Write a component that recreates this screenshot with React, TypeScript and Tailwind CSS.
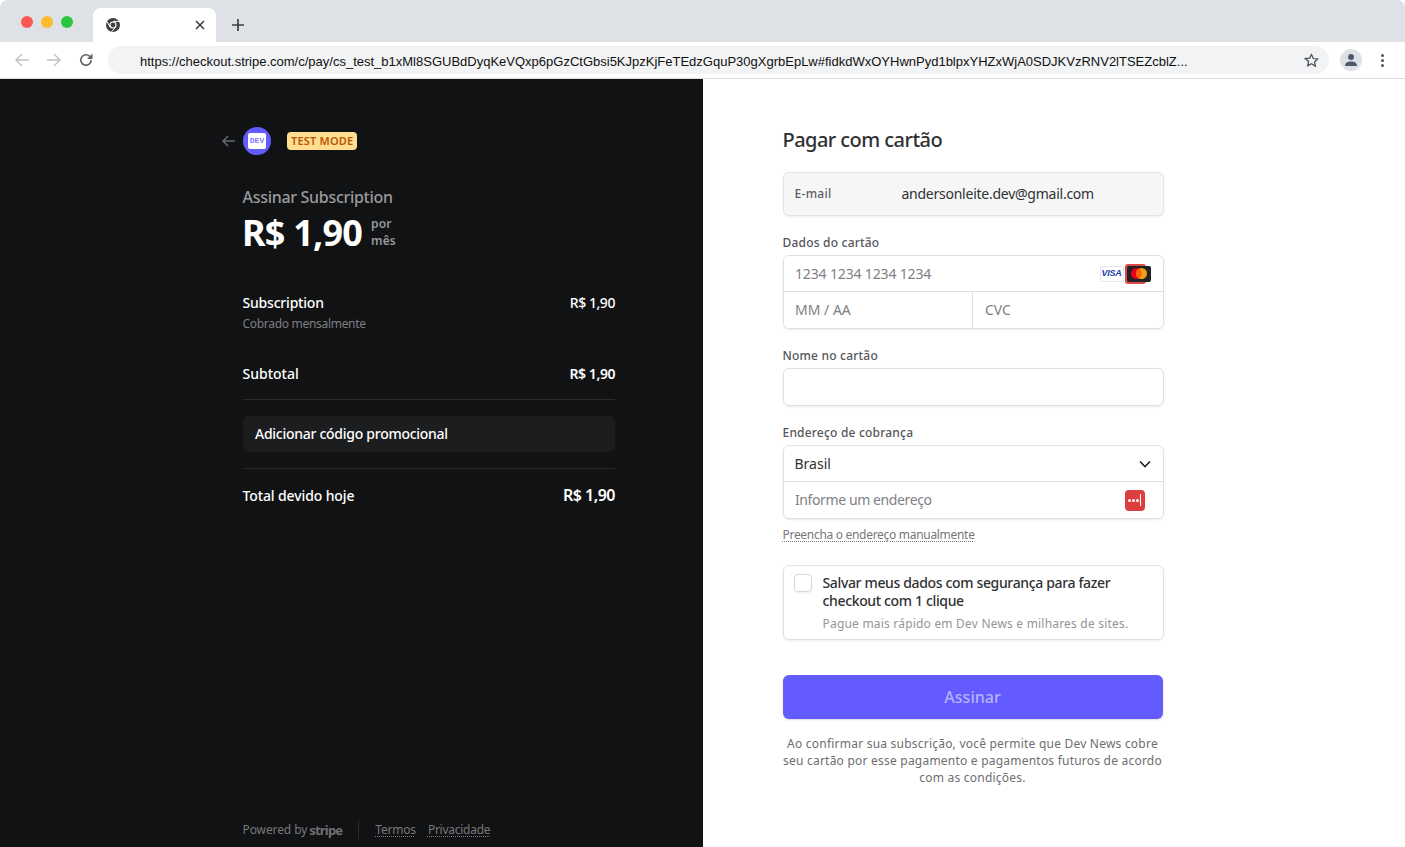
import React from "react";

const font = { fontFamily: '"Noto Sans", "Open Sans", sans-serif' };

function Chrome() {
  return (
    <div className="shrink-0" style={{ fontFamily: '"Liberation Sans", sans-serif' }}>
      <div className="h-[42px] bg-[#dee1e6] rounded-t-[8px] flex items-end relative">
        <div className="flex gap-[8px] pl-[21px] pb-[14px]">
          <span className="w-[12px] h-[12px] rounded-full bg-[#fc5753]" />
          <span className="w-[12px] h-[12px] rounded-full bg-[#fdbc2e]" />
          <span className="w-[12px] h-[12px] rounded-full bg-[#29c73f]" />
        </div>
        <div className="ml-[20px] w-[123px] h-[34px] bg-white rounded-t-[8px] flex items-center justify-between pl-[13px] pr-[11px]">
          <svg width="14" height="14" viewBox="0 0 14 14">
            <circle cx="7" cy="7" r="7" fill="#3c4043" />
            <circle cx="7" cy="7" r="3.6" fill="#fff" />
            <circle cx="7" cy="7" r="2.4" fill="#3c4043" />
            <path d="M7 3.4h6.4M4 9l-3-5.5M8.8 10.2 5.5 13.8" stroke="#fff" strokeWidth="1" />
          </svg>
          <svg width="10" height="10" viewBox="0 0 10 10"><path d="M1 1l8 8M9 1l-8 8" stroke="#3c4043" strokeWidth="1.6" /></svg>
        </div>
        <div className="ml-[15px] pb-[10px]">
          <svg width="14" height="14" viewBox="0 0 14 14" className="block"><path d="M7 1v12M1 7h12" stroke="#3c4043" strokeWidth="1.7" /></svg>
        </div>
      </div>
      <div className="h-[37px] bg-white border-b border-[#dadce0] flex items-center">
        <div className="w-[108px] flex items-center pl-[15px] gap-[18px] shrink-0">
          <svg width="14" height="14" viewBox="0 0 14 14"><path d="M14 7H1.5M7 1 1 7l6 6" fill="none" stroke="#bdc1c6" strokeWidth="1.4" /></svg>
          <svg width="14" height="14" viewBox="0 0 14 14"><path d="M0 7h12.5M7 1l6 6-6 6" fill="none" stroke="#bdc1c6" strokeWidth="1.4" /></svg>
          <svg width="14" height="14" viewBox="0 0 14 14"><path d="M12.2 7a5.2 5.2 0 1 1-1.5-3.7L12.5 5" fill="none" stroke="#5f6368" strokeWidth="1.6" /><path d="M13.5 0.5v5.5H8z" fill="#5f6368" /></svg>
        </div>
        <div className="w-[1221px] h-[28px] rounded-full bg-[#f1f3f4] flex items-center pl-[32px] pr-[10px] text-[13px] text-[#111] justify-between shrink-0">
          <span className="whitespace-nowrap pt-[3px]">https://checkout.stripe.com/c/pay/cs_test_b1xMl8SGUBdDyqKeVQxp6pGzCtGbsi5KJpzKjFeTEdzGquP30gXgrbEpLw#fidkdWxOYHwnPyd1blpxYHZxWjA0SDJKVzRNV2lTSEZcblZ...</span>
          <svg width="15" height="15" viewBox="0 0 24 24" fill="none" stroke="#4a4e52" strokeWidth="2"><path d="m12 2.5 2.9 6.3 6.9.8-5.1 4.7 1.4 6.8L12 17l-6.1 3.4 1.4-6.8-5.1-4.7 6.9-.8z" /></svg>
        </div>
        <div className="ml-[11px] w-[22px] h-[22px] rounded-full bg-[#dee1e6] flex items-center justify-center shrink-0">
          <svg width="14" height="14" viewBox="0 0 14 14" fill="#50596b"><circle cx="7" cy="4" r="3" /><path d="M1 13c0-3.2 2.6-4.6 6-4.6s6 1.4 6 4.6z" /></svg>
        </div>
        <div className="ml-[19px] flex flex-col gap-[2px]">
          <span className="w-[3px] h-[3px] rounded-full bg-[#50565c]" />
          <span className="w-[3px] h-[3px] rounded-full bg-[#50565c]" />
          <span className="w-[3px] h-[3px] rounded-full bg-[#50565c]" />
        </div>
      </div>
    </div>
  );
}

function Left() {
  return (
    <div className="w-[703px] h-full bg-[#111214] flex flex-col pl-[243px] pr-[88px] shrink-0">
      <div className="flex items-center h-[28px] mt-[48px] relative">
        <svg width="14" height="12" viewBox="0 0 14 12" className="absolute left-[-21px] top-[8px]"><path d="M13 6H1.5M6 1 1 6l5 5" fill="none" stroke="#666a70" strokeWidth="1.5" /></svg>
        <div className="w-[28px] h-[28px] rounded-full bg-[#635bff] flex items-center justify-center">
          <div className="w-[18px] h-[16px] bg-white rounded-[2px] flex items-center justify-center text-[8px] font-bold text-[#7f79ff] leading-none" style={{ fontFamily: '"Liberation Mono", monospace' }}>DEV</div>
        </div>
        <div className="ml-[16px] h-[18px] px-[4px] rounded-[4px] bg-[#ffde92] text-[#bb5504] text-[11px] font-semibold leading-[18px] tracking-[0.2px]">TEST MODE</div>
      </div>
      <div className="mt-[30px] text-[16px] leading-[24px] text-[#9a9b9c] font-medium tracking-[-0.3px] ml-[-0.5px]">Assinar Subscription</div>
      <div className="flex items-center mt-[6px] h-[36px] ml-[-1px]">
        <div className="text-[36px] leading-[36px] font-bold text-white tracking-[-0.8px] whitespace-nowrap">R$ 1,90</div>
        <div className="ml-[9px] pb-[3px] text-[12px] leading-[17px] font-semibold text-[#98999b] tracking-[0.1px]">por<br />mês</div>
      </div>
      <div className="mt-[42px] flex justify-between text-[14px] leading-[20px] font-medium text-white">
        <span className="tracking-[-0.2px] ml-[-0.5px]">Subscription</span><span className="tracking-[-0.45px]">R$ 1,90</span>
      </div>
      <div className="mt-[2px] text-[12px] leading-[18px] text-[#7e7f81] tracking-[-0.3px] ml-[-0.5px]">Cobrado mensalmente</div>
      <div className="mt-[31px] h-[36px] border-b border-[#2a2b2d] flex justify-between text-[14px] leading-[20px] font-medium text-white">
        <span className="ml-[-0.5px]">Subtotal</span><span className="font-semibold tracking-[-0.45px]">R$ 1,90</span>
      </div>
      <div className="mt-[16px] h-[36px] rounded-[6px] bg-[#1c1d1f] px-[12px] pb-[2px] flex items-center text-[14px] font-medium text-white tracking-[-0.27px]">Adicionar código promocional</div>
      <div className="mt-[16px] border-t border-[#2a2b2d] pt-[15px] flex justify-between items-center h-[22px] box-content text-[14px] font-medium text-white">
        <span className="tracking-[-0.12px] ml-[-0.5px]">Total devido hoje</span><span className="text-[16px] font-semibold tracking-[-0.5px]">R$ 1,90</span>
      </div>
      <div className="mt-auto mb-[8px] flex items-center text-[12px] leading-[18px] text-[#77787a] ml-[-0.5px]">
        <span className="tracking-[-0.1px]">Powered by</span>
        <span className="ml-[2px] font-bold text-[13px] tracking-[-0.8px] text-[#6f7072]">stripe</span>
        <span className="ml-[16px] w-px h-[18px] bg-[#2a2b2d]" />
        <a className="ml-[16px] underline decoration-dotted underline-offset-2 tracking-[-0.2px]">Termos</a>
        <a className="ml-[12px] underline decoration-dotted underline-offset-2 tracking-[-0.25px]">Privacidade</a>
      </div>
    </div>
  );
}

const shadow = "shadow-[0_1px_2px_rgba(0,0,0,0.08)]";
const label = "text-[12px] leading-[16px] font-medium text-[#55565a] tracking-[0.2px]";

function Right() {
  return (
    <div className="flex-1 h-full bg-white pl-[79.5px] overflow-hidden">
      <div className="w-[381px]">
        <div className="mt-[47px] text-[20px] leading-[28px] font-medium text-[#303133] tracking-[-0.55px]">Pagar com cartão</div>
        <div className={`mt-[18px] h-[44px] rounded-[6px] bg-[#f6f6f7] border border-[#e3e4e6] flex items-center ${shadow}`}>
          <span className="w-[118px] pl-[11px] text-[12px] font-medium text-[#5e5f62] tracking-[0.3px]">E-mail</span>
          <span className="text-[14px] text-[#303133] tracking-[-0.25px] pb-[2px]">andersonleite.dev@gmail.com</span>
        </div>
        <div className={`mt-[19px] ${label}`}>Dados do cartão</div>
        <div className={`mt-[4px] rounded-[6px] border border-[#e0e0e2] ${shadow}`}>
          <div className="h-[36px] flex items-center justify-between pl-[11.5px] pr-[12px] border-b border-[#e0e0e2] text-[14px] text-[#808184]">
            <span className="tracking-[-0.15px]">1234 1234 1234 1234</span>
            <span className="flex items-center gap-[3px]">
              <span className="w-[24px] h-[16px] border border-[#e6e6e6] rounded-[1px] flex items-center justify-center text-[9px] font-bold italic text-[#1a3fb0] leading-none tracking-[-0.2px]" style={{ fontFamily: '"Liberation Sans", sans-serif' }}>VISA</span>
              <span className="relative w-[24px] h-[16px]">
                <span className="absolute left-[-2px] top-[-2px] w-[21px] h-[20px] rounded-[3px] bg-[#d9484a]" />
                <span className="absolute inset-0 rounded-[2px] bg-[#222] flex items-center justify-center">
                  <svg width="16" height="11" viewBox="0 0 16 11"><circle cx="5.5" cy="5.5" r="5.5" fill="#eb001b" /><circle cx="10.5" cy="5.5" r="5.5" fill="#f79e1b" /><path d="M8 .7a5.5 5.5 0 0 1 0 9.6 5.5 5.5 0 0 1 0-9.6z" fill="#ff5f00" /></svg>
                </span>
              </span>
            </span>
          </div>
          <div className="h-[36px] flex text-[14px] text-[#808184]">
            <div className="w-[189.5px] pl-[11.5px] flex items-center border-r border-[#e0e0e2] pb-[1px]">MM / AA</div>
            <div className="pl-[12px] flex items-center pb-[1px]">CVC</div>
          </div>
        </div>
        <div className={`mt-[19px] ${label}`}>Nome no cartão</div>
        <div className={`mt-[4px] h-[38px] rounded-[6px] border border-[#e0e0e2] ${shadow}`} />
        <div className={`mt-[19px] ${label}`}>Endereço de cobrança</div>
        <div className={`mt-[4px] rounded-[6px] border border-[#e0e0e2] ${shadow}`}>
          <div className="h-[36px] flex items-center justify-between pl-[11px] pr-[12px] border-b border-[#e0e0e2] text-[14px] text-[#303133]">
            <span>Brasil</span>
            <svg width="12" height="8" viewBox="0 0 12 8"><path d="m1 1.5 5 5 5-5" fill="none" stroke="#222" strokeWidth="1.6" /></svg>
          </div>
          <div className="h-[36px] flex items-center justify-between pl-[11.5px] pr-[18px] text-[14px] text-[#808184]">
            <span className="tracking-[-0.4px] pb-[2px]">Informe um endereço</span>
            <span className="w-[20px] h-[21px] rounded-[4px] bg-[#dd3f3f] flex items-center justify-center gap-[1px]">
              <span className="w-[3px] h-[3px] rounded-full bg-white" />
              <span className="w-[3px] h-[3px] rounded-full bg-white" />
              <span className="w-[3px] h-[3px] rounded-full bg-white" />
              <span className="w-[1px] h-[12px] bg-white" />
            </span>
          </div>
        </div>
        <div className="mt-[7px] text-[12px] leading-[18px] text-[#77787b] underline decoration-dotted underline-offset-2 tracking-[-0.3px]">Preencha o endereço manualmente</div>
        <div className={`mt-[21px] h-[75px] rounded-[6px] border border-[#e0e0e2] flex pl-[10.5px] pt-[8px] ${shadow}`}>
          <span className={`w-[18px] h-[18px] rounded-[4px] border border-[#d8d8da] shrink-0 ${shadow}`} />
          <div className="ml-[10.5px]">
            <div className="text-[14px] leading-[18px] font-medium text-[#303133] tracking-[-0.35px]">Salvar meus dados com segurança para fazer<br />checkout com 1 clique</div>
            <div className="mt-[5px] text-[12px] leading-[18px] text-[#949598] tracking-[0.2px]">Pague mais rápido em Dev News e milhares de sites.</div>
          </div>
        </div>
        <div className="mt-[35px] h-[44px] w-[380px] rounded-[6px] bg-[#635bff] flex items-center justify-center text-[16px] font-medium text-[#b5b2ff] shadow-[0_1px_2px_rgba(0,0,0,0.15)]">Assinar</div>
        <div className="mt-[16px] w-[380px] text-center text-[12px] leading-[17px] text-[#6d6e71] tracking-[0.22px]">
          Ao confirmar sua subscrição, você permite que Dev News cobre<br />seu cartão por esse pagamento e pagamentos futuros de acordo<br />com as condições.
        </div>
      </div>
    </div>
  );
}

export default function App() {
  return (
    <div className="w-[1405px] h-[847px] overflow-hidden flex flex-col bg-white" style={font}>
      <Chrome />
      <div className="flex h-[768px]">
        <Left />
        <Right />
      </div>
    </div>
  );
}
